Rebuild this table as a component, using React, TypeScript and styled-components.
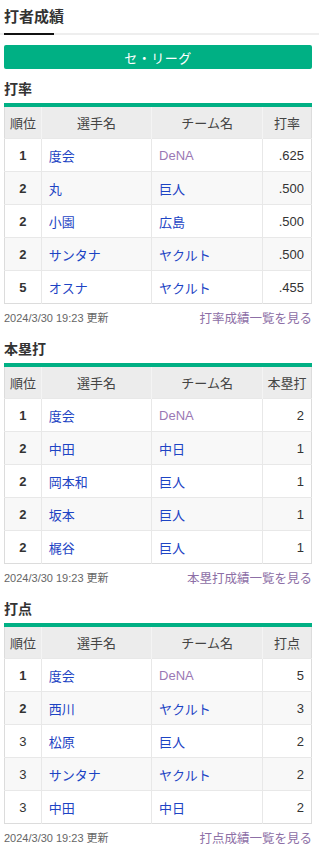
import { FC } from "react";
import styled, { createGlobalStyle } from "styled-components";

const GlobalStyle = createGlobalStyle`
  body {
    margin: 0;
    background: #fff;
    font-family: "Liberation Sans", "Noto Sans CJK JP", sans-serif;
    color: #333;
  }
`;

interface IRow {
  rank: string;
  bold?: boolean;
  player: string;
  team: string;
  value: string;
}

interface IRanking {
  title: string;
  link: string;
  rows: IRow[];
}

const rankings: IRanking[] = [
  {
    title: "打率",
    link: "打率成績一覧を見る",
    rows: [
      { rank: "1", bold: true, player: "度会", team: "DeNA", value: ".625" },
      { rank: "2", bold: true, player: "丸", team: "巨人", value: ".500" },
      { rank: "2", bold: true, player: "小園", team: "広島", value: ".500" },
      { rank: "2", bold: true, player: "サンタナ", team: "ヤクルト", value: ".500" },
      { rank: "5", bold: true, player: "オスナ", team: "ヤクルト", value: ".455" },
    ],
  },
  {
    title: "本塁打",
    link: "本塁打成績一覧を見る",
    rows: [
      { rank: "1", bold: true, player: "度会", team: "DeNA", value: "2" },
      { rank: "2", bold: true, player: "中田", team: "中日", value: "1" },
      { rank: "2", bold: true, player: "岡本和", team: "巨人", value: "1" },
      { rank: "2", bold: true, player: "坂本", team: "巨人", value: "1" },
      { rank: "2", bold: true, player: "梶谷", team: "巨人", value: "1" },
    ],
  },
  {
    title: "打点",
    link: "打点成績一覧を見る",
    rows: [
      { rank: "1", bold: true, player: "度会", team: "DeNA", value: "5" },
      { rank: "2", bold: true, player: "西川", team: "ヤクルト", value: "3" },
      { rank: "3", player: "松原", team: "巨人", value: "2" },
      { rank: "3", player: "サンタナ", team: "ヤクルト", value: "2" },
      { rank: "3", player: "中田", team: "中日", value: "2" },
    ],
  },
];

// column widths as a share of the table
const columns = ["12%", "35.9%", "36.2%", "15.9%"];

const Page = styled.div`
  width: 319px;
  padding-bottom: 2px;
`;

const TitleBar = styled.div`
  height: 35px;
  border-bottom: 2px solid #eeeeee;
  box-sizing: border-box;
  padding-left: 4px;
  display: flex;
  align-items: flex-end;
`;

const Title = styled.h1`
  margin: 0 0 -2px;
  width: 50px;
  height: 35px;
  box-sizing: border-box;
  padding-top: 7px;
  border-bottom: 2px solid #111;
  font-size: 15px;
  font-weight: bold;
  color: #333;
  white-space: nowrap;
  line-height: 20px;
`;

const Content = styled.div`
  padding: 0 7px 0 4px;
`;

const LeagueButton = styled.div`
  margin-top: 10px;
  height: 24px;
  background: #00b084;
  border-radius: 2px;
  color: #fff;
  font-size: 13px;
  display: flex;
  align-items: center;
  justify-content: center;
  letter-spacing: 0.5px;
`;

const Sections = styled.div`
  margin-top: 10px;
  display: flex;
  flex-direction: column;
  gap: 9px;
`;

const Section = styled.section`
  display: flex;
  flex-direction: column;
`;

const Heading = styled.h2`
  margin: 0 0 4px;
  padding-top: 1px;
  font-size: 14px;
  line-height: 19px;
  font-weight: bold;
  color: #333;
`;

const Table = styled.table`
  width: 100%;
  border-collapse: collapse;
  table-layout: fixed;
  border: 1px solid #dcdcdc;
  border-top: 4px solid #00b084;
`;

const Th = styled.th`
  height: 31px;
  padding: 0;
  background: #ececec;
  font-size: 13px;
  font-weight: normal;
  color: #444;
  text-align: center;
  border-left: 1px solid #f4f4f4;
  white-space: nowrap;
  &:first-child {
    border-left: none;
  }
`;

const Tr = styled.tr<{ shaded: boolean }>`
  background: ${(p) => (p.shaded ? "#f8f8f8" : "#fff")};
  border-top: 1px solid #e8e8e8;
`;

const Td = styled.td<{ align?: "left" | "center" | "right" }>`
  height: 32px;
  padding: 0 7px;
  font-size: 13px;
  text-align: ${(p) => p.align || "left"};
  border-left: 1px solid #e8e8e8;
  white-space: nowrap;
  color: #333;
  &:first-child {
    border-left: none;
  }
`;

const Rank = styled.span<{ bold?: boolean }>`
  font-weight: ${(p) => (p.bold ? "bold" : "normal")};
  color: #333;
`;

const PlayerLink = styled.a`
  color: #1d44c4;
  text-decoration: none;
`;

const TeamLink = styled.a<{ team: string }>`
  color: ${(p) => (p.team === "DeNA" ? "#9a78b4" : "#1d44c4")};
  text-decoration: none;
`;

const Footer = styled.div`
  height: 26px;
  display: flex;
  justify-content: space-between;
  align-items: center;
`;

const Updated = styled.span`
  font-size: 11px;
  color: #666;
`;

const MoreLink = styled.a`
  font-size: 12.5px;
  color: #8d6fa6;
  text-decoration: none;
`;

const RankingTable: FC<{ ranking: IRanking }> = ({ ranking }) => (
  <Section>
    <Heading>{ranking.title}</Heading>
    <Table>
      <colgroup>
        {columns.map((w, i) => (
          <col key={i} style={{ width: w }} />
        ))}
      </colgroup>
      <thead>
        <tr>
          <Th>順位</Th>
          <Th>選手名</Th>
          <Th>チーム名</Th>
          <Th>{ranking.title}</Th>
        </tr>
      </thead>
      <tbody>
        {ranking.rows.map((row, i) => (
          <Tr key={i} shaded={i % 2 === 1}>
            <Td align="center">
              <Rank bold={row.bold}>{row.rank}</Rank>
            </Td>
            <Td>
              <PlayerLink href="#">{row.player}</PlayerLink>
            </Td>
            <Td>
              <TeamLink href="#" team={row.team}>
                {row.team}
              </TeamLink>
            </Td>
            <Td align="right">{row.value}</Td>
          </Tr>
        ))}
      </tbody>
    </Table>
    <Footer>
      <Updated>2024/3/30 19:23 更新</Updated>
      <MoreLink href="#">{ranking.link}</MoreLink>
    </Footer>
  </Section>
);

const App: FC = () => (
  <Page>
    <GlobalStyle />
    <TitleBar>
      <Title>打者成績</Title>
    </TitleBar>
    <Content>
      <LeagueButton>セ・リーグ</LeagueButton>
      <Sections>
        {rankings.map((r) => (
          <RankingTable key={r.title} ranking={r} />
        ))}
      </Sections>
    </Content>
  </Page>
);

export default App;
